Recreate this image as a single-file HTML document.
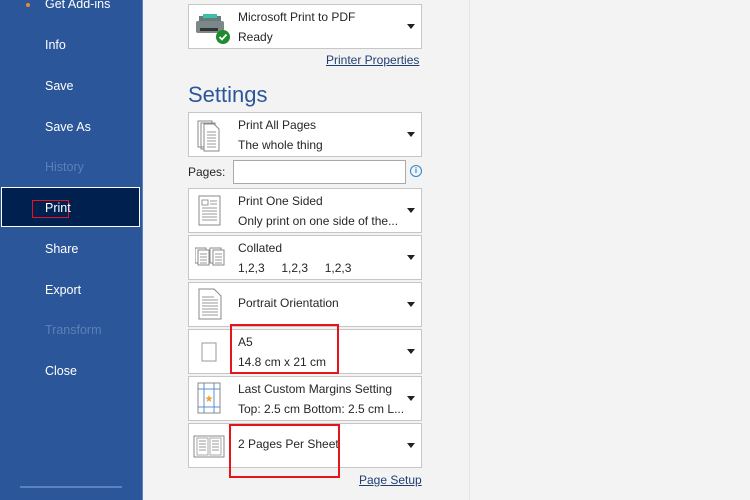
<!DOCTYPE html>
<html><head><style>
body{margin:0;width:750px;height:500px;overflow:hidden;background:#f3f3f3;font-family:"Liberation Sans",sans-serif;position:relative}
.side{position:absolute;left:0;top:0;width:142px;height:500px;background:#2b579a;border-right:1px solid #5b82bf}
.ni{position:absolute;left:45px;color:#fff;font-size:12.5px;transform:translateY(-50%)}
.dim{color:#5d7fb8}
.sel{position:absolute;left:1px;top:187px;width:137px;height:38px;background:#002050;border:1.5px solid #fff}
.vl{position:absolute;left:469px;top:0;width:1px;height:500px;background:#e4e4e4}
.box{position:absolute;left:188px;width:232px;background:#fff;border:1px solid #c6c6c6;height:43px}
.t1,.t2{position:absolute;left:49px;font-size:12px;color:#262626;white-space:nowrap}
.t1{top:5px}.t2{top:25px}
.arr{position:absolute;right:6px;top:19px;width:0;height:0;border-left:4px solid transparent;border-right:4px solid transparent;border-top:5px solid #222}
.ic{position:absolute;left:6px;top:6px}
.lnk{position:absolute;font-size:12px;color:#1f3f73;text-decoration:underline}
.red{position:absolute;border:2px solid #e8141c}
</style></head><body>
<div class="side"></div>
<div class="sel"></div>
<div style="position:absolute;left:32px;top:200px;width:35px;height:16px;border:1px solid #e8141c"></div>
<div style="position:absolute;left:26px;top:3px;width:4px;height:4px;border-radius:50%;background:#e88a2e"></div>
<div class="ni" style="top:4px">Get Add-ins</div>
<div class="ni" style="top:45px">Info</div>
<div class="ni" style="top:86px">Save</div>
<div class="ni" style="top:127px">Save As</div>
<div class="ni dim" style="top:167px">History</div>
<div class="ni" style="top:208px">Print</div>
<div class="ni" style="top:249px">Share</div>
<div class="ni" style="top:290px">Export</div>
<div class="ni dim" style="top:330px">Transform</div>
<div class="ni" style="top:371px">Close</div>
<div style="position:absolute;left:20px;top:486px;width:102px;height:2px;background:#5b82bf"></div>
<div class="vl"></div>

<div class="box" style="top:4px;height:43px">
<svg class="ic" width="40" height="34" style="left:5px;top:5px"><rect x="5" y="6" width="22" height="5" fill="#6a7a7a"/><rect x="9" y="4" width="14" height="4" fill="#3cc0a8"/><rect x="2" y="11" width="28" height="12" rx="2" fill="#7a8888"/><rect x="6" y="18" width="18" height="3" fill="#333"/><circle cx="29" cy="27" r="7" fill="#1e8c2e"/><path d="M25.5 27l2.5 2.5 4.5-5" stroke="#fff" stroke-width="1.8" fill="none"/></svg>
<div class="t1">Microsoft Print to PDF</div><div class="t2">Ready</div><div class="arr"></div></div>
<div class="lnk" style="left:326px;top:53px">Printer Properties</div>
<div style="position:absolute;left:188px;top:82px;font-size:22px;color:#2b579a">Settings</div>

<div class="box" style="top:112px">
<svg class="ic" width="32" height="34" style="top:5px"><path d="M3 3h14v26H3z M6 5h14v26H6z" fill="#fff" stroke="#888"/><path d="M9 6h10l5 5v22H9z" fill="#fff" stroke="#888"/><path d="M12 14h9M12 17h9M12 20h9M12 23h9M12 26h9M12 29h9" stroke="#999"/></svg>
<div class="t1">Print All Pages</div><div class="t2">The whole thing</div><div class="arr"></div></div>
<div style="position:absolute;left:188px;top:165px;font-size:12px;color:#262626">Pages:</div>
<div style="position:absolute;left:233px;top:160px;width:171px;height:22px;background:#fff;border:1px solid #aaa"></div>
<div style="position:absolute;left:410px;top:165px;width:10px;height:10px;border:1px solid #2a86d0;border-radius:50%;font-size:8px;color:#2a86d0;text-align:center;line-height:10px;font-weight:bold">i</div>

<div class="box" style="top:188px">
<svg class="ic" width="30" height="34" style="top:5px"><rect x="4" y="2" width="21" height="29" fill="#fff" stroke="#888"/><path d="M7 6h6v5H7zM15 7h7M15 10h7M7 14h15M7 17h15M7 20h15M7 23h15M7 26h15" stroke="#999" fill="none"/></svg>
<div class="t1">Print One Sided</div><div class="t2">Only print on one side of the...</div><div class="arr"></div></div>

<div class="box" style="top:235px">
<svg class="ic" width="36" height="32"><g fill="#fff" stroke="#888"><rect x="0" y="6" width="11" height="15"/><rect x="3" y="8" width="11" height="15"/><rect x="15" y="6" width="11" height="15"/><rect x="18" y="8" width="11" height="15"/></g><path d="M5 12h7M5 15h7M5 18h7M5 21h7M20 12h7M20 15h7M20 18h7M20 21h7" stroke="#999"/></svg>
<div class="t1">Collated</div><div class="t2">1,2,3 &nbsp;&nbsp;&nbsp; 1,2,3 &nbsp;&nbsp;&nbsp; 1,2,3</div><div class="arr"></div></div>

<div class="box" style="top:282px">
<svg class="ic" width="30" height="34" style="top:4px"><path d="M4 2h15l7 7v23H4z" fill="#fff" stroke="#888"/><path d="M7 10h12M7 13h16M7 16h16M7 19h16M7 22h16M7 25h16M7 28h16" stroke="#999"/></svg>
<div class="t1" style="top:13px">Portrait Orientation</div><div class="arr"></div></div>

<div class="box" style="top:329px">
<svg class="ic" width="30" height="32"><rect x="7" y="7" width="14" height="18" fill="#fff" stroke="#999"/></svg>
<div class="t1">A5</div><div class="t2">14.8 cm x 21 cm</div><div class="arr"></div></div>

<div class="box" style="top:376px">
<svg class="ic" width="30" height="34" style="top:4px"><rect x="3" y="2" width="22" height="30" fill="#fff" stroke="#888"/><path d="M3 8h22M3 26h22M9 2v30M19 2v30" stroke="#5b8fd0"/><text x="9.5" y="21" font-size="10" fill="#e8a030">★</text></svg>
<div class="t1">Last Custom Margins Setting</div><div class="t2">Top: 2.5 cm Bottom: 2.5 cm L...</div><div class="arr"></div></div>

<div class="box" style="top:423px">
<svg class="ic" width="36" height="32" style="left:4px"><rect x="1" y="6" width="30" height="21" fill="#fff" stroke="#888"/><rect x="4" y="8" width="11" height="17" fill="#fff" stroke="#aaa"/><rect x="17" y="8" width="11" height="17" fill="#fff" stroke="#aaa"/><path d="M6 11h7M6 14h7M6 17h7M6 20h7M19 11h7M19 14h7M19 17h7M19 20h7" stroke="#999"/></svg>
<div class="t1" style="top:13px">2 Pages Per Sheet</div><div class="arr"></div></div>
<div class="lnk" style="left:359px;top:473px">Page Setup</div>

<div class="red" style="left:230px;top:324px;width:105px;height:46px"></div>
<div class="red" style="left:229px;top:424px;width:107px;height:50px"></div>
</body></html>
